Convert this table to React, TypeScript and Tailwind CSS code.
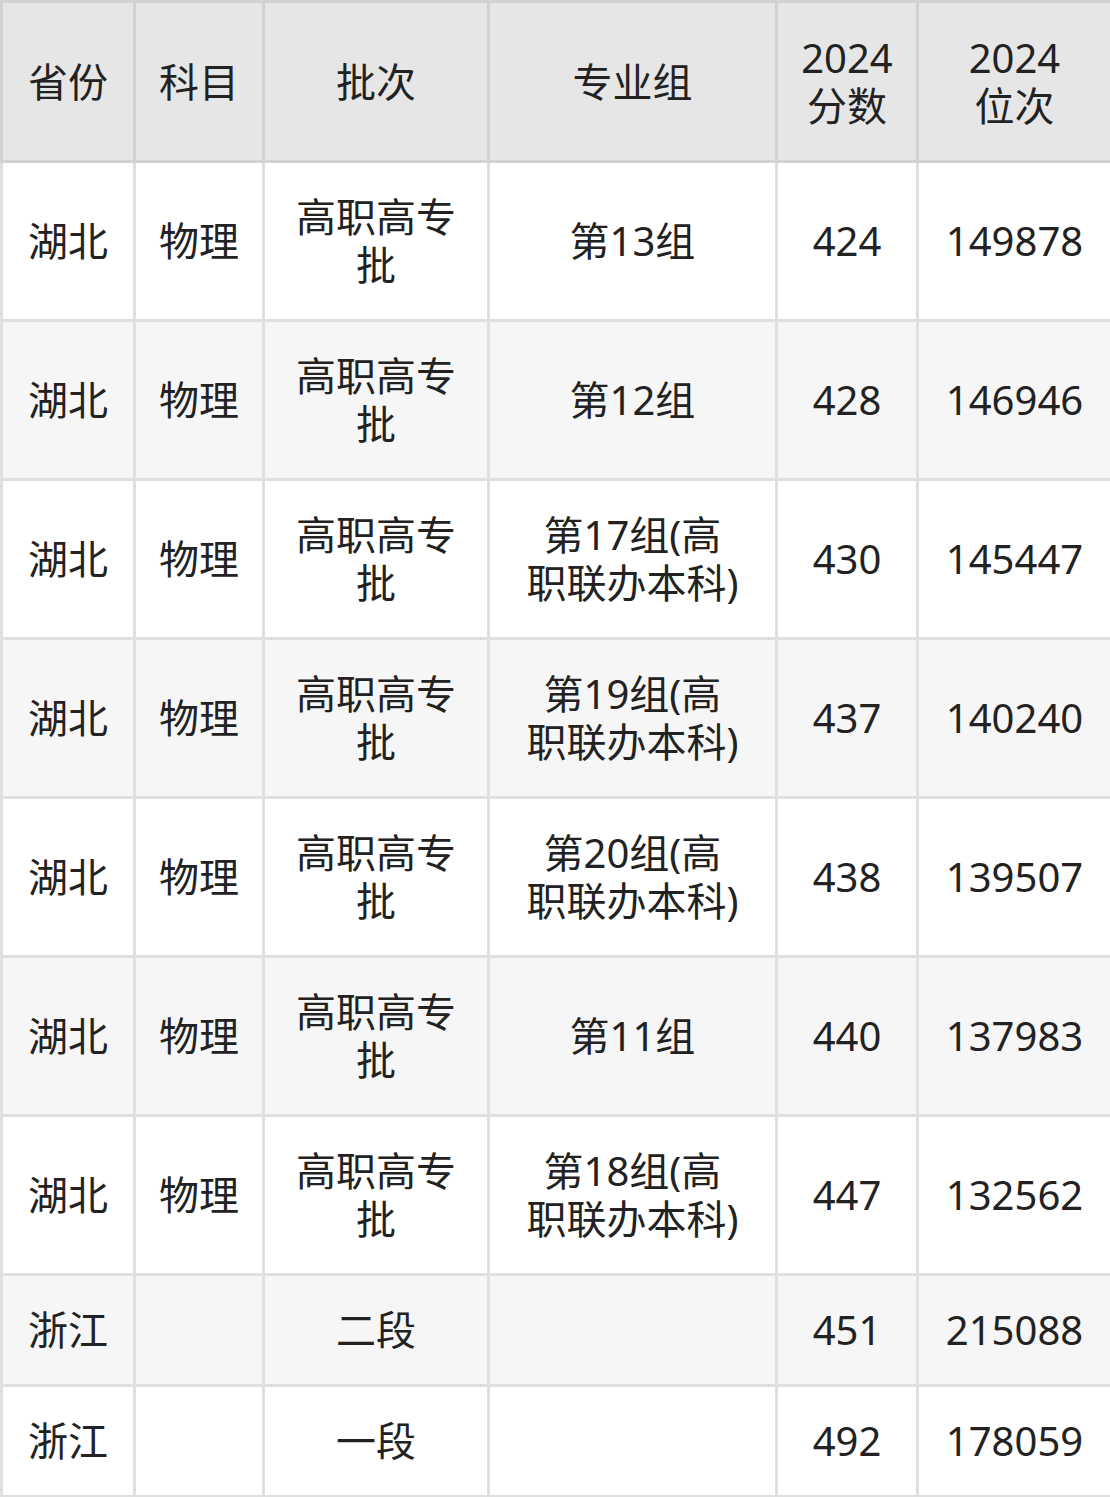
const rows = [
  { prov: '湖北', subj: '物理', batch: ['高职高专', '批'], group: ['第13组'], score: '424', rank: '149878' },
  { prov: '湖北', subj: '物理', batch: ['高职高专', '批'], group: ['第12组'], score: '428', rank: '146946' },
  { prov: '湖北', subj: '物理', batch: ['高职高专', '批'], group: ['第17组(高', '职联办本科)'], score: '430', rank: '145447' },
  { prov: '湖北', subj: '物理', batch: ['高职高专', '批'], group: ['第19组(高', '职联办本科)'], score: '437', rank: '140240' },
  { prov: '湖北', subj: '物理', batch: ['高职高专', '批'], group: ['第20组(高', '职联办本科)'], score: '438', rank: '139507' },
  { prov: '湖北', subj: '物理', batch: ['高职高专', '批'], group: ['第11组'], score: '440', rank: '137983' },
  { prov: '湖北', subj: '物理', batch: ['高职高专', '批'], group: ['第18组(高', '职联办本科)'], score: '447', rank: '132562' },
  { prov: '浙江', subj: '', batch: ['二段'], group: [], score: '451', rank: '215088' },
  { prov: '浙江', subj: '', batch: ['一段'], group: [], score: '492', rank: '178059' },
]

const Lines = ({ lines }: { lines: string[] }) => (
  <>
    {lines.map((l, i) => (
      <div key={i}>{l}</div>
    ))}
  </>
)

export default function App() {
  const th = 'border-[3px] border-[#d2d2d2] text-center align-middle font-normal p-0'
  const td = 'border-[3px] border-[#e0e0e0] text-center align-middle p-0'
  return (
    <div
      className="w-[1110px] h-[1497px] bg-white text-[#222] text-[40px] leading-[48px]"
      style={{ fontFamily: '"Noto Sans", "Noto Sans CJK SC", sans-serif' }}
    >
      <table className="w-[1110px] table-fixed border-collapse">
        <colgroup>
          <col className="w-[133px]" />
          <col className="w-[129px]" />
          <col className="w-[225px]" />
          <col className="w-[288px]" />
          <col className="w-[141px]" />
          <col className="w-[194px]" />
        </colgroup>
        <thead>
          <tr className="h-[160px] bg-[#e6e6e6]">
            <th className={th}>省份</th>
            <th className={th}>科目</th>
            <th className={th}>批次</th>
            <th className={th}>专业组</th>
            <th className={th}><Lines lines={['2024', '分数']} /></th>
            <th className={th}><Lines lines={['2024', '位次']} /></th>
          </tr>
        </thead>
        <tbody>
          {rows.map((r, i) => (
            <tr
              key={i}
              className={`${i >= 7 ? 'h-[111px]' : 'h-[159px]'} ${i % 2 === 0 ? 'bg-white' : 'bg-[#f6f6f6]'}`}
            >
              <td className={td}>{r.prov}</td>
              <td className={td}>{r.subj}</td>
              <td className={td}><Lines lines={r.batch} /></td>
              <td className={td}><Lines lines={r.group} /></td>
              <td className={td}>{r.score}</td>
              <td className={td}>{r.rank}</td>
            </tr>
          ))}
        </tbody>
      </table>
    </div>
  )
}
